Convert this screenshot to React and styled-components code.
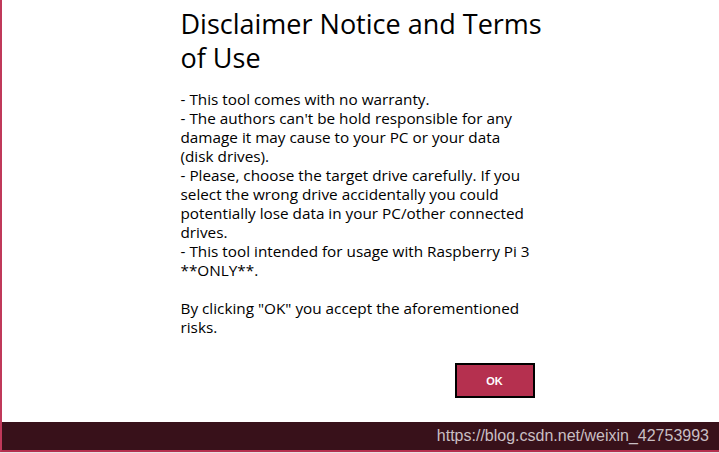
import React from 'react'
import styled, { createGlobalStyle } from 'styled-components'

const GlobalStyle = createGlobalStyle`
  html, body {
    margin: 0;
    padding: 0;
    background: #ffffff;
  }
  body {
    font-family: 'Open Sans', 'Noto Sans', sans-serif;
  }
`

const Frame = styled.div`
  width: 719px;
  height: 453px;
  display: flex;
  flex-direction: column;
  overflow: hidden;
`

const Window = styled.div`
  flex: 1;
  display: flex;
  flex-direction: column;
  border-left: 2px solid #c0395a;
  border-bottom: 2px solid #b5304f;
  background: #ffffff;
`

const Content = styled.div`
  flex: 1;
  display: flex;
  justify-content: center;
  padding-left: 2px;
`

const Column = styled.div`
  width: 362px;
  display: flex;
  flex-direction: column;
  padding-top: 7px;
`

const Title = styled.h1`
  margin: 0;
  font-size: 27px;
  font-weight: 400;
  line-height: 34px;
  color: #000;
  white-space: nowrap;
`

const Body = styled.div`
  margin-top: 15px;
  font-size: 15.3px;
  line-height: 19px;
  color: #000;
  white-space: nowrap;
`

const Line = styled.div`
  min-height: 19px;
`

const Actions = styled.div`
  display: flex;
  justify-content: flex-end;
  margin-top: 26px;
  padding-right: 8px;
`

const OkButton = styled.button`
  width: 80px;
  height: 35px;
  border: 2px solid #000;
  background: #b5304f;
  color: #fff;
  font-family: 'Liberation Sans', Arial, sans-serif;
  font-weight: 700;
  font-size: 11px;
  cursor: pointer;
`

const StatusBar = styled.div`
  height: 28px;
  background: #38111a;
  display: flex;
  align-items: center;
  justify-content: flex-end;
  padding-right: 10px;
`

const Watermark = styled.span`
  font-family: 'Liberation Sans', Arial, sans-serif;
  font-size: 16px;
  color: #c9bfc3;
`

const BottomStrip = styled.div`
  height: 1px;
  background: #e8e2e4;
`

const lines = [
  '- This tool comes with no warranty.',
  "- The authors can't be hold responsible for any",
  'damage it may cause to your PC or your data',
  '(disk drives).',
  '- Please, choose the target drive carefully. If you',
  'select the wrong drive accidentally you could',
  'potentially lose data in your PC/other connected',
  'drives.',
  '- This tool intended for usage with Raspberry Pi 3',
  '**ONLY**.',
  '',
  'By clicking "OK" you accept the aforementioned',
  'risks.',
]

export default function App() {
  return (
    <Frame>
      <GlobalStyle />
      <Window>
        <Content>
          <Column>
            <Title>
              Disclaimer Notice and Terms
              <br />
              of Use
            </Title>
            <Body>
              {lines.map((l, i) => (
                <Line key={i}>{l}</Line>
              ))}
            </Body>
            <Actions>
              <OkButton>OK</OkButton>
            </Actions>
          </Column>
        </Content>
        <StatusBar>
          <Watermark>https://blog.csdn.net/weixin_42753993</Watermark>
        </StatusBar>
      </Window>
      <BottomStrip />
    </Frame>
  )
}
